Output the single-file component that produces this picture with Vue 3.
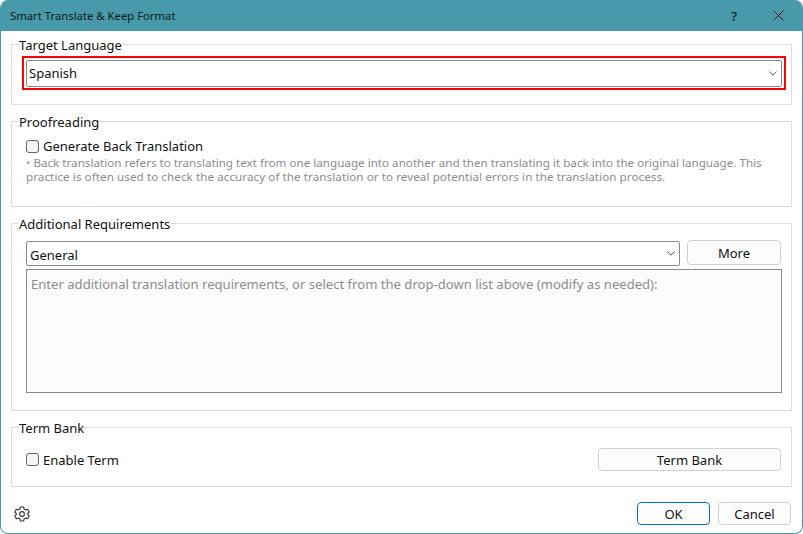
<script setup>
const noteFirst = 'Back translation refers to translating text from one language into another and then translating it back into the original language. This'
const noteSecond = 'practice is often used to check the accuracy of the translation or to reveal potential errors in the translation process.'
</script>

<template>
  <div class="win">
    <header class="title">
      <span class="title-text">Smart Translate &amp; Keep Format</span>
      <span class="help">?</span>
      <svg class="close" width="11" height="11" viewBox="0 0 11 11"><path d="M.5.500l10 10M10.500.500l-10 10" stroke="#111" fill="none" stroke-width="1"/></svg>
    </header>
    <main class="body">
      <fieldset class="group g1">
        <legend>Target Language</legend>
        <div class="red">
          <div class="select tall"><span>Spanish</span><svg class="chev" width="8" height="5" viewBox="0 0 8 5"><path d="M.4.500L4 4.200 7.600.500" stroke="#555" fill="none"/></svg></div>
        </div>
      </fieldset>
      <fieldset class="group g2">
        <legend>Proofreading</legend>
        <label class="check"><span class="box"></span>Generate Back Translation</label>
        <p class="note"><span class="line"><span class="dot">•</span>&nbsp;{{ noteFirst }}</span><span class="line second">{{ noteSecond }}</span></p>
      </fieldset>
      <fieldset class="group g3">
        <legend>Additional Requirements</legend>
        <div class="row">
          <div class="select grow"><span>General</span><svg class="chev" width="8" height="5" viewBox="0 0 8 5"><path d="M.4.500L4 4.200 7.600.500" stroke="#555" fill="none"/></svg></div>
          <button class="btn more">More</button>
        </div>
        <div class="area">Enter additional translation requirements, or select from the drop-down list above (modify as needed):</div>
      </fieldset>
      <fieldset class="group g4">
        <legend>Term Bank</legend>
        <div class="row between">
          <label class="check"><span class="box"></span>Enable Term</label>
          <button class="btn term">Term Bank</button>
        </div>
      </fieldset>
    </main>
    <footer class="foot">
      <svg class="gear" width="18" height="18" viewBox="0 0 18 18"><path d="M7.400 2h3.200l.5 2 1.500.9 2-.6 1.600 2.800-1.500 1.400v1l1.500 1.400-1.600 2.800-2-.6-1.500.9-.5 2H7.400l-.5-2-1.500-.9-2 .6-1.600-2.800 1.500-1.400v-1L1.800 7.100l1.600-2.800 2 .6 1.500-.9z" fill="none" stroke="#333" stroke-width="1.100" stroke-linejoin="round"/><circle cx="9" cy="9" r="2.400" fill="none" stroke="#333" stroke-width="1.100"/></svg>
      <div class="actions">
        <button class="btn ok">OK</button>
        <button class="btn cancel">Cancel</button>
      </div>
    </footer>
  </div>
</template>

<style scoped>
.win {
  box-sizing: border-box;
  width: 803px;
  height: 534px;
  display: flex;
  flex-direction: column;
  background: #fff;
  border: 1px solid #4899aa;
  border-top: 0;
  border-radius: 8px;
  overflow: hidden;
  font-family: "Noto Sans", "Open Sans", sans-serif;
  font-size: 13px;
  color: #111;
}
.title {
  flex: none;
  height: 31px;
  background: #4899aa;
  display: flex;
  align-items: center;
  padding: 0 18px 0 9px;
  font-size: 11.3px;
  color: #0c1c20;
}
.title-text { flex: 1; }
.help { font-size: 13px; margin-right: 36px; font-weight: 500; }
.body {
  flex: none;
  padding: 0 10px;
  display: flex;
  flex-direction: column;
  gap: 7px;
  margin-top: 4px;
}
.group {
  box-sizing: border-box;
  margin: 0;
  min-width: 0;
  border: 1px solid #dcdcdc;
  padding: 0 10px 0 14px;
}
legend {
  padding: 0;
  margin-left: -7px;
  font-size: 13px;
  line-height: 20px;
  height: 18px;
}
.g1 { height: 70px; }
.g2 { height: 95px; }
.g3 { height: 197px; }
.g4 { height: 69px; }
.red {
  margin: 3px -5px 0 -4px;
  border: 2px solid #f00;
  padding: 2px;
  height: 34px;
  box-sizing: border-box;
}
.select {
  box-sizing: border-box;
  height: 25px;
  border: 1px solid #8a8a8a;
  border-radius: 2px;
  display: flex;
  align-items: center;
  justify-content: space-between;
  padding: 0 3px;
  background: #fff;
}
.chev { margin-right: 1px; }
.tall { height: 27px; padding-left: 2px; }
.tall span { margin-bottom: 2px; }
.grow { flex: 1; align-self: flex-end; }
.grow span { margin-top: 2px; }
.check {
  display: flex;
  align-items: center;
  gap: 4px;
  height: 20px;
}
.g2 .check { margin-top: 6px; }
.box {
  box-sizing: border-box;
  width: 13px;
  height: 13px;
  border: 1px solid #666;
  border-radius: 3px;
  background: #f6f6f6;
}
.note {
  margin: 0;
  font-size: 11.65px;
  line-height: 14px;
  color: #8d8d8d;
  white-space: nowrap;
}
.line { display: block; }
.second { letter-spacing: 0.065px; }
.dot { color: #8aa0b0; }
.row { display: flex; align-items: center; gap: 7px; }
.g3 .row { height: 26px; margin-top: 8px; align-items: flex-start; }
.between { justify-content: space-between; margin-top: 12px; }
.btn {
  box-sizing: border-box;
  font: inherit;
  color: inherit;
  background: #fdfdfd;
  border: 1px solid #d0d0d0;
  border-radius: 4px;
  padding: 0;
  height: 23px;
}
.more { width: 94px; height: 25px; }
.term { width: 183px; height: 23px; }
.area {
  box-sizing: border-box;
  height: 124px;
  margin: 3px -1px 0 0;
  border: 1px solid #8a8a8a;
  background: #fcfcfc;
  color: #8d8d8d;
  padding: 5px 4px 0;
  font-size: 13.08px;
}
.foot {
  flex: 1;
  display: flex;
  align-items: center;
  justify-content: space-between;
  padding: 7px 11px 0 12px;
}
.actions { display: flex; gap: 8px; }
.ok { width: 73px; border-color: #0a6cb8; }
.cancel { width: 73px; }
</style>

<style>
html, body { margin: 0; background: #fff; }
</style>
